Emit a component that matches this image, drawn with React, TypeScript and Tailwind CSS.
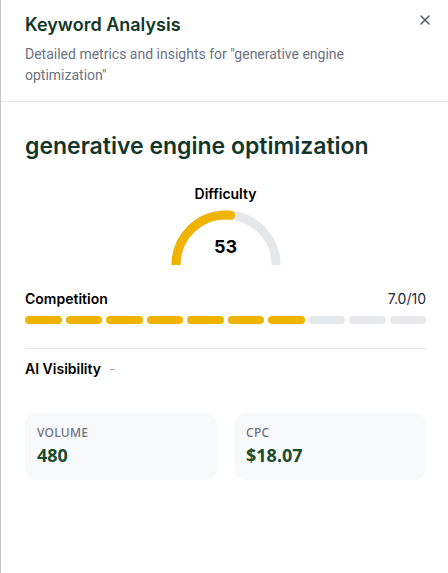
import React from "react";

const Gauge = ({ value }: { value: number }) => {
  return (
    <div className="relative h-[60px] w-[120px]">
      <svg width="120" height="60" viewBox="0 0 120 60">
        <path
          d="M 10 60 A 50 50 0 0 1 110 60"
          fill="none"
          stroke="#e5e7eb"
          strokeWidth="9"
        />
        <path
          d="M 10 60 A 50 50 0 0 1 110 60"
          fill="none"
          stroke="#f0b400"
          strokeWidth="9"
          strokeLinecap="round"
          pathLength={100}
          strokeDasharray={`${value} 100`}
        />
      </svg>
      <div className="absolute inset-x-0 top-[33px] text-center text-[18px] font-bold leading-none text-black">
        {value}
      </div>
    </div>
  );
};

const App = () => {
  const competition = 7;
  return (
    <div
      className="min-h-[573px] w-full border-l border-[#c4c4c4] bg-white"
      style={{ fontFamily: "Inter, 'Noto Sans', sans-serif" }}
    >
      <div className="relative border-b border-[#e5e7eb] pb-[15px] pl-[24px] pr-[22px] pt-[13px]">
        <h2 className="text-[18px] font-semibold leading-[24px] text-[#12372a]">
          Keyword Analysis
        </h2>
        <p
          className="mt-[7px] pr-[40px] text-[14px] leading-[21px] text-[#6b7280]"
          style={{ fontFamily: "Roboto, 'Noto Sans', sans-serif" }}
        >
          Detailed metrics and insights for "generative engine optimization"
        </p>
        <button className="absolute right-[15px] top-[12px] text-[#4b5563]">
          <svg width="16" height="16" viewBox="0 0 24 24" fill="none" stroke="currentColor" strokeWidth="2" strokeLinecap="round">
            <path d="M18 6 6 18" />
            <path d="m6 6 12 12" />
          </svg>
        </button>
      </div>

      <div className="pl-[24px] pr-[22px] pt-[28px]">
        <h1 className="text-[23px] font-semibold leading-[32px] text-[#12372a]">
          generative engine optimization
        </h1>

        <div className="mt-[22px] flex flex-col items-center">
          <div className="text-[14px] font-semibold leading-[20px] text-black">Difficulty</div>
          <div className="mt-[1px]">
            <Gauge value={53} />
          </div>
        </div>

        <div className="mt-[24px] flex items-center justify-between text-[14px] leading-[20px]">
          <span className="font-semibold text-black">Competition</span>
          <span className="text-[#1f2937]">{competition.toFixed(1)}/10</span>
        </div>
        <div className="mt-[7px] flex gap-[4px]">
          {Array.from({ length: 10 }).map((_, i) => (
            <div
              key={i}
              className={`h-[8px] flex-1 rounded-full ${i < competition ? "bg-[#f0b400]" : "bg-[#e5e7eb]"}`}
            />
          ))}
        </div>

        <div className="mt-[24px] border-t border-[#e5e7eb] pt-[10px]">
          <div className="flex items-center gap-[8px] text-[14px] leading-[20px]">
            <span className="font-semibold text-black">AI Visibility</span>
            <span className="text-[#9ca3af]">-</span>
          </div>
        </div>

        <div
          className="mt-[34px] grid grid-cols-2 gap-[17px]"
          style={{ fontFamily: "'Noto Sans', 'Open Sans', sans-serif" }}
        >
          <div className="rounded-[12px] bg-[#f8f9fb] px-[12px] pb-[13px] pt-[11px]">
            <div className="text-[12px] font-medium uppercase leading-[18px] tracking-wide text-[#6b7280]">Volume</div>
            <div className="mt-[1px] text-[18px] font-bold leading-[24px] text-[#1a4d2e]">480</div>
          </div>
          <div className="rounded-[12px] bg-[#f8f9fb] px-[12px] pb-[13px] pt-[11px]">
            <div className="text-[12px] font-medium uppercase leading-[18px] tracking-wide text-[#6b7280]">CPC</div>
            <div className="mt-[1px] text-[18px] font-bold leading-[24px] text-[#1a4d2e]">$18.07</div>
          </div>
        </div>
      </div>
    </div>
  );
};

export default App;
